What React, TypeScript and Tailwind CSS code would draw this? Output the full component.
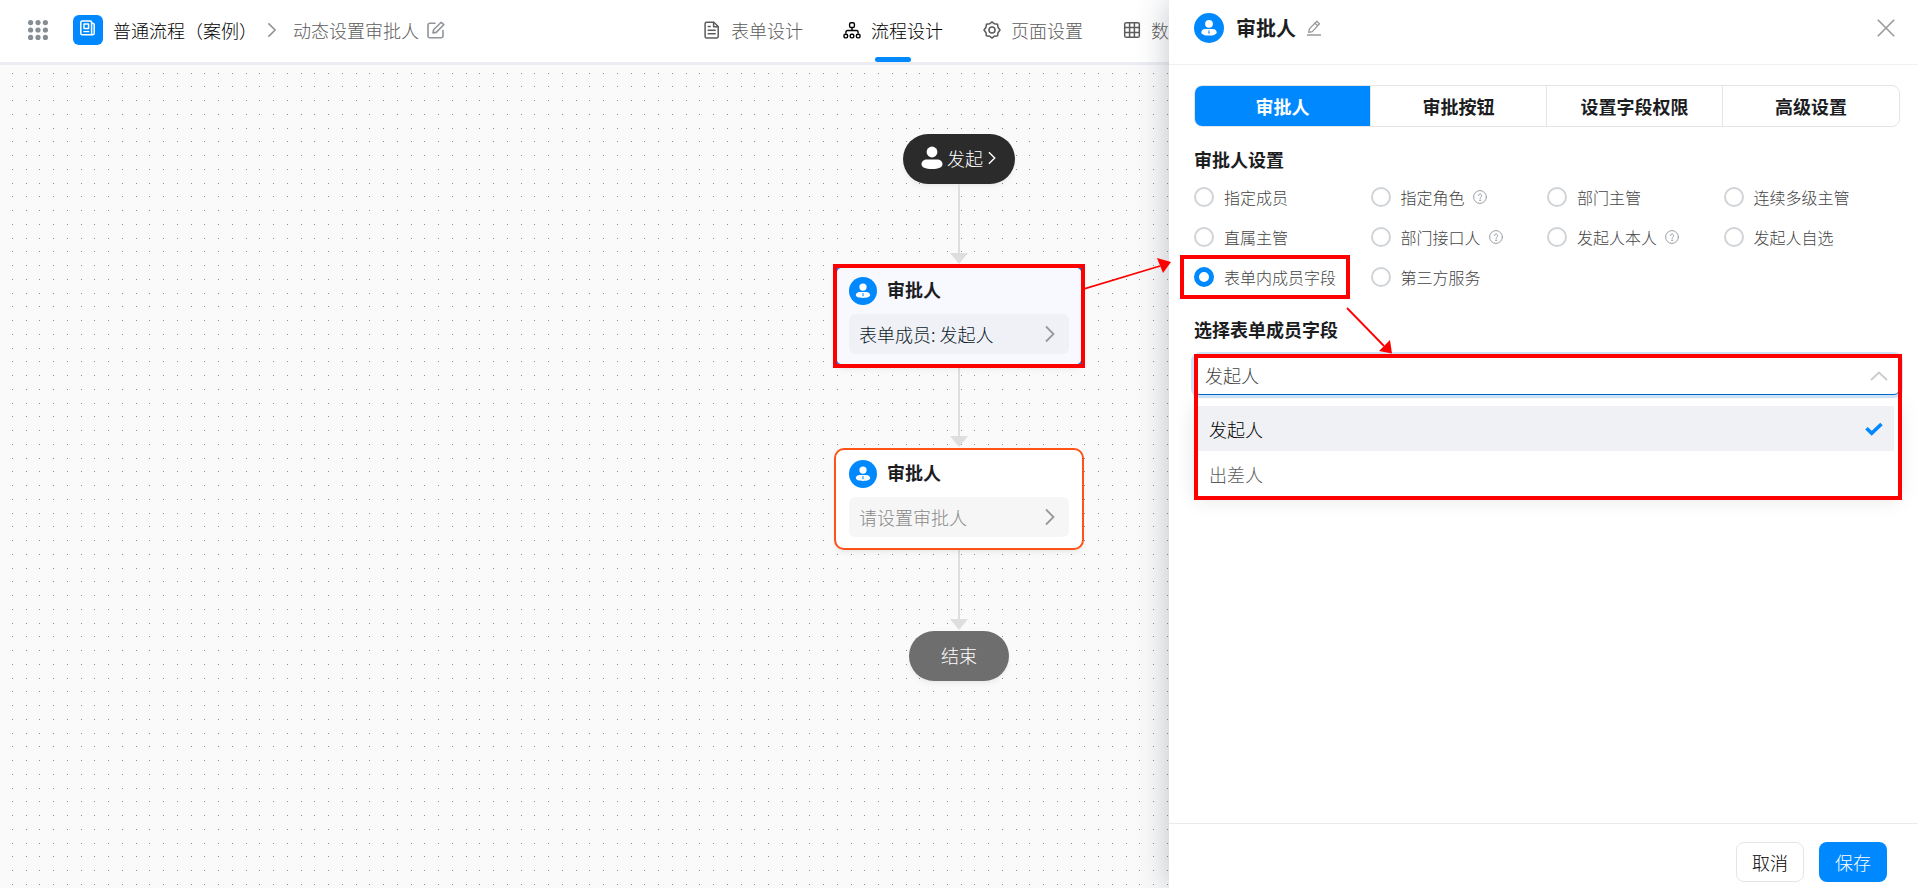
import { ReactNode, useState } from "react"
import clsx from "clsx"

interface ITab {
    label: string
    icon: ReactNode
}

interface IRadioOption {
    label: string
    help?: boolean
}

interface IFlowCardProps {
    text: string
    selected?: boolean
}

const approverOptions: IRadioOption[] = [
    { label: '指定成员' },
    { label: '指定角色', help: true },
    { label: '部门主管' },
    { label: '连续多级主管' },
    { label: '直属主管' },
    { label: '部门接口人', help: true },
    { label: '发起人本人', help: true },
    { label: '发起人自选' },
    { label: '表单内成员字段' },
    { label: '第三方服务' },
]

const panelTabs = ['审批人', '审批按钮', '设置字段权限', '高级设置']

const memberFields = ['发起人', '出差人']

function AppsIcon() {
    return (
        <svg width="20" height="20" viewBox="0 0 20 20" fill="#868e94">
            {[2.6, 10, 17.4].map(y => [2.6, 10, 17.4].map(x => (
                <circle key={`${x}-${y}`} cx={x} cy={y} r="2.6" />
            )))}
        </svg>
    )
}

function LogoIcon() {
    return (
        <svg width="16" height="16" viewBox="0 0 16 16" fill="none" stroke="#fff" strokeWidth="1.5" strokeLinejoin="round">
            <path d="M2.2 1h8.2a1.2 1.2 0 0 1 1.2 1.2V14.8H2.2A1.4 1.4 0 0 1 .8 13.4V2.4A1.4 1.4 0 0 1 2.2 1z" />
            <path d="M11.6 2.600l2.600 1.600v9a1.600 1.600 0 0 1-1.600 1.600h-1" />
            <rect x="4" y="4" width="4.600" height="4.600" />
            <path d="M3.300 11.600h6" strokeWidth="1.300" />
        </svg>
    )
}

function EditIcon() {
    return (
        <svg width="18" height="18" viewBox="0 0 18 18" fill="none" stroke="#8f959b" strokeWidth="1.6" strokeLinecap="round" strokeLinejoin="round">
            <path d="M8 2.200H2.800A1.800 1.800 0 0 0 1 4v11a1.800 1.800 0 0 0 1.800 1.800h11.400A1.800 1.800 0 0 0 16 15V9.500" />
            <path d="M14.200 1.300l2.600 2.400-7.600 7.700-3.200.5.6-3.200z" />
        </svg>
    )
}

function FormIcon() {
    return (
        <svg width="18" height="18" viewBox="0 0 18 18" fill="none" stroke="currentColor" strokeWidth="1.500" strokeLinecap="round" strokeLinejoin="round">
            <path d="M3.600 1.200h7.200l4.400 4.300v9.900a1.500 1.500 0 0 1-1.500 1.500H3.600a1.500 1.500 0 0 1-1.500-1.500V2.700a1.500 1.500 0 0 1 1.500-1.500z" />
            <path d="M10.600 1.400v4.300h4.400M5.200 5.500h2M5.200 9.200h7M5.200 12.800h7" />
        </svg>
    )
}

function FlowIcon() {
    return (
        <svg width="18" height="18" viewBox="0 0 18 18" fill="none" stroke="currentColor" strokeWidth="1.400">
            <rect x="6.600" y="1.700" width="4.800" height="4.800" rx="1.600" />
            <path d="M9 6.500v3M2.900 12.600v-1.500A1.600 1.600 0 0 1 4.500 9.500h9a1.600 1.600 0 0 1 1.600 1.600v1.500" />
            <rect x="1" y="13.300" width="3.600" height="3.600" rx="1.300" />
            <rect x="7.200" y="13.300" width="3.600" height="3.600" rx="1.300" />
            <rect x="13.400" y="13.300" width="3.600" height="3.600" rx="1.300" />
        </svg>
    )
}

function GearIcon() {
    return (
        <svg width="18" height="18" viewBox="0 0 18 18" fill="none" stroke="currentColor" strokeWidth="1.500" strokeLinejoin="round">
            <path d="M9 .9l2.400 1.900 3.200.4.400 3.100L17 9l-2 2.700-.4 3.100-3.200.4L9 17.100l-2.400-1.900-3.200-.4-.4-3.100L1 9l2-2.700.4-3.100 3.200-.4z" />
            <circle cx="9" cy="9" r="3" />
        </svg>
    )
}

function TableIcon() {
    return (
        <svg width="18" height="18" viewBox="0 0 18 18" fill="none" stroke="currentColor" strokeWidth="1.500">
            <rect x="1.700" y="1.700" width="14.600" height="14.600" rx="1.600" />
            <path d="M1.700 6.600h14.600M1.700 11.400h14.600M6.600 1.700v14.600M11.400 1.700v14.600" />
        </svg>
    )
}

function ApproverIcon({ size }: { size: number }) {
    return (
        <svg width={size} height={size} viewBox="0 0 30 30" className="shrink-0">
            <circle cx="15" cy="15" r="15" fill="#0089ff" />
            <circle cx="15" cy="10.800" r="3.900" fill="#fff" />
            <path d="M11.500 16h7c2.600 0 4.200 1.500 4.200 3.400 0 2-3.500 3.100-7.700 3.100s-7.700-1.100-7.700-3.100c0-1.900 1.600-3.400 4.200-3.400z" fill="#fff" />
            <path d="M14.400 17.200h1.200l-.2.900.3 2-.7.900-.7-.9.300-2z" fill="#0089ff" />
        </svg>
    )
}

function PersonIcon() {
    return (
        <svg width="22" height="24" viewBox="0 0 22 24" fill="#fff">
            <circle cx="11" cy="6" r="5.400" />
            <path d="M6 13.500h10c3.200 0 5.500 2 5.500 4.800 0 3.200-4 4.700-10.500 4.700S.5 21.500.5 18.300c0-2.800 2.300-4.800 5.500-4.800z" />
        </svg>
    )
}

function HelpIcon() {
    return (
        <svg width="14" height="14" viewBox="0 0 14 14" fill="none" stroke="#9a9fa5" strokeLinecap="round">
            <circle cx="7" cy="7" r="6.400" />
            <path d="M5.300 5.600a1.700 1.700 0 1 1 2.600 1.500c-.6.300-.9.600-.9 1.200" />
            <circle cx="7" cy="10.200" r=".3" />
        </svg>
    )
}

function Chevron({ className }: { className?: string }) {
    return (
        <svg width="10" height="18" viewBox="0 0 10 18" fill="none" stroke="currentColor" strokeWidth="1.800" className={className}>
            <path d="M1 1.500l7.500 7.500L1 16.500" />
        </svg>
    )
}

const headerTabs: ITab[] = [
    { label: '表单设计', icon: <FormIcon /> },
    { label: '流程设计', icon: <FlowIcon /> },
    { label: '页面设置', icon: <GearIcon /> },
    { label: '数据管理', icon: <TableIcon /> },
]

function Header() {
    const [active, setActive] = useState('流程设计')

    return (
        <header className="grid h-[65px] grid-cols-[1fr_auto_1fr] border-b-3 border-[#ecedf2] bg-white">
            <div className="flex items-center pl-7 pb-0.5">
                <button type="button" aria-label="应用"><AppsIcon /></button>
                <div className="ml-[25px] flex size-[30px] items-start justify-center rounded-md bg-[#0089ff] pt-[5px]">
                    <LogoIcon />
                </div>
                <span className="ml-2.5 text-black">普通流程（案例）</span>
                <Chevron className="ml-2.5 h-4 text-[#8f959b]" />
                <span className="ml-4 text-[#5c5c5c]">动态设置审批人</span>
                <button type="button" aria-label="编辑" className="ml-2"><EditIcon /></button>
            </div>
            <nav className="flex gap-10 pl-2">
                {headerTabs.map(tab => (
                    <button
                        key={tab.label}
                        type="button"
                        onClick={() => setActive(tab.label)}
                        className={clsx("relative flex items-center gap-2.5 pb-0.5", tab.label === active ? "text-black" : "text-[#5c5c5c]")}
                    >
                        {tab.icon}
                        <span>{tab.label}</span>
                        {tab.label === active && (
                            <span className="absolute bottom-0 left-1/2 h-[5px] w-9 -translate-x-1/2 rounded-sm bg-[#0089ff]" />
                        )}
                    </button>
                ))}
            </nav>
        </header>
    )
}

function Dots() {
    return (
        <svg className="absolute inset-0 size-full">
            <defs>
                <pattern id="dots" x="12" y="8" width="55" height="55" patternUnits="userSpaceOnUse">
                    {[0, 13, 27, 41].map(y => [0, 14, 27, 41].map(x => (
                        <rect key={`${x}-${y}`} x={x} y={y} width="1" height="1" fill="#8b8d9c" />
                    )))}
                </pattern>
            </defs>
            <rect width="100%" height="100%" fill="url(#dots)" />
        </svg>
    )
}

function Connector() {
    return (
        <svg width="18" height="81" viewBox="0 0 18 81" fill="#dedede">
            <rect x="8" width="2" height="70" />
            <path d="M0 69h18L9 80z" />
        </svg>
    )
}

function FlowCard({ text, selected }: IFlowCardProps) {
    return (
        <div className={clsx("relative w-[250px] rounded-[10px] border-2 shadow-md shadow-black/5", selected ? "border-[#0089ff] bg-[#f8f9ff]" : "border-[#ff5219] bg-white")}>
            <div className="px-[13px] pt-2.5 pb-[11px]">
                <div className="flex items-start gap-2.5">
                    <ApproverIcon size={28} />
                    <span className="font-bold text-[#1c1d1f]">审批人</span>
                </div>
                <button
                    type="button"
                    className={clsx("mt-[9px] flex h-10 w-full items-center justify-between rounded-md pr-3.5 pl-2.5", selected ? "bg-[#f0f1f6] text-[#0d1b2a]" : "bg-[#f6f6f6] text-[#888]")}
                >
                    <span>{text}</span>
                    <Chevron className="text-[#999]" />
                </button>
            </div>
            {selected && (
                <>
                    <span className="absolute -inset-[3px] border-4 border-[#f00]" />
                    <svg width="90" height="36" viewBox="0 0 90 36" className="absolute -top-2.5 left-full z-20 ml-0.5">
                        <path d="M0 32L76 9" stroke="#f00" strokeWidth="1.800" />
                        <path d="M73 1l14 4-8 11z" fill="#f00" />
                    </svg>
                </>
            )}
        </div>
    )
}

function Canvas() {
    return (
        <main className="relative flex grow flex-col items-center bg-[#fafafa] pt-[69px]">
            <Dots />
            <div className="relative flex flex-col items-center">
                <button type="button" className="flex h-[50px] w-28 items-center justify-center gap-1 rounded-full bg-[#2b2b2b] pb-0.5 text-white shadow-md shadow-black/5">
                    <PersonIcon />
                    <span>发起</span>
                    <Chevron className="h-3.5" />
                </button>
                <Connector />
                <FlowCard text="表单成员: 发起人" selected />
                <Connector />
                <FlowCard text="请设置审批人" />
                <Connector />
                <div className="flex h-[50px] w-[100px] items-center justify-center rounded-full bg-[#6e6e6e] pb-0.5 text-white shadow-md shadow-black/5">结束</div>
            </div>
        </main>
    )
}

function ApproverPanel() {
    const [tab, setTab] = useState(panelTabs[0])
    const [approver, setApprover] = useState('表单内成员字段')
    const [field, setField] = useState(memberFields[0])

    return (
        <aside className="absolute inset-y-0 right-0 z-10 flex w-[749px] max-w-full flex-col bg-white shadow-[0_0_30px_rgba(50,60,80,0.3)]">
            <div className="flex items-center border-b border-[#f0f0f0] pt-[13px] pr-[23px] pb-[21px] pl-[25px]">
                <ApproverIcon size={30} />
                <h2 className="ml-3 text-xl font-bold text-[#1c1d1f]">审批人</h2>
                <button type="button" aria-label="重命名" className="ml-2.5">
                    <svg width="16" height="16" viewBox="0 0 16 16" fill="none" stroke="#999" strokeWidth="1.300" strokeLinejoin="round">
                        <path d="M10.800 1.200l2.700 2.600-7.200 7.800-3.600.7.700-3.400zM9 3.200l2.700 2.500M1 15h14" />
                    </svg>
                </button>
                <button type="button" aria-label="关闭" className="ml-auto">
                    <svg width="18" height="18" viewBox="0 0 18 18" fill="none" stroke="#999" strokeWidth="1.600">
                        <path d="M.8.8l16.400 16.400M17.200.8L.8 17.200" />
                    </svg>
                </button>
            </div>

            <div className="grow pt-5 pr-[18px] pl-[25px]">
                <div className="grid h-[42px] grid-cols-4 divide-x divide-[#e5e5e5] overflow-hidden rounded-lg border border-[#e5e5e5]">
                    {panelTabs.map(item => (
                        <button
                            key={item}
                            type="button"
                            onClick={() => setTab(item)}
                            className={clsx("font-bold", item === tab ? "bg-[#0089ff] text-white" : "text-[#1c1d1f]")}
                        >{item}</button>
                    ))}
                </div>

                <h3 className="mt-5 font-bold text-[#1c1d1f]">审批人设置</h3>
                <div className="mt-4 grid grid-cols-4 gap-y-5">
                    {approverOptions.map(option => (
                        <div key={option.label} className="flex h-5 items-center">
                            <label className="relative flex items-center gap-2.5 text-base leading-5 text-[#444]">
                                <input
                                    type="radio"
                                    name="approver"
                                    checked={option.label === approver}
                                    onChange={() => setApprover(option.label)}
                                    className="size-5 appearance-none rounded-full border-2 border-[#d0d3d8] bg-white checked:border-5 checked:border-[#0089ff]"
                                />
                                {option.label}
                                {option.label === '表单内成员字段' && (
                                    <>
                                        <span className="absolute -inset-x-3.5 -inset-y-3 border-4 border-[#f00]" />
                                        <svg width="48" height="50" viewBox="0 0 48 50" className="absolute top-10 left-full z-20 ml-2.5">
                                            <path d="M1 1l37 38" stroke="#f00" strokeWidth="1.800" />
                                            <path d="M44 33l2 13.500-13-2.500z" fill="#f00" />
                                        </svg>
                                    </>
                                )}
                            </label>
                            {option.help && <button type="button" aria-label="说明" className="ml-2"><HelpIcon /></button>}
                        </div>
                    ))}
                </div>

                <label htmlFor="member-field" className="mt-[30px] block font-bold text-[#1c1d1f]">选择表单成员字段</label>
                <div className="relative mt-3.5">
                    <div className="relative">
                        <select
                            id="member-field"
                            value={field}
                            onChange={event => setField(event.target.value)}
                            className="block h-10 w-full appearance-none rounded-md border border-[#0068c4] bg-white px-2.5 text-[#444] shadow-[0_0_0_3px_#cfe3f7] outline-none"
                        >
                            {memberFields.map(item => <option key={item}>{item}</option>)}
                        </select>
                        <svg width="18" height="10" viewBox="0 0 18 10" fill="none" stroke="#ccc" strokeWidth="1.800" className="pointer-events-none absolute top-4 right-3">
                            <path d="M1 9l8-7.500L17 9" />
                        </svg>
                    </div>
                    <ul className="mt-1 rounded-md bg-white pt-[7px] pr-1.5 pl-1 shadow-[0_4px_20px_rgba(0,0,0,0.1)]">
                        {memberFields.map(item => (
                            <li key={item}>
                                <button
                                    type="button"
                                    onClick={() => setField(item)}
                                    className={clsx("flex h-[45px] w-full items-center justify-between px-[11px]", item === field ? "bg-[#f0f1f4] text-black" : "text-[#5c5c5c]")}
                                >
                                    {item}
                                    {item === field && (
                                        <svg width="18" height="14" viewBox="0 0 18 14" fill="none" stroke="#0089ff" strokeWidth="3.600">
                                            <path d="M1.500 6.200l5.200 5L16.500 2" />
                                        </svg>
                                    )}
                                </button>
                            </li>
                        ))}
                    </ul>
                    <span className="pointer-events-none absolute -top-px -right-0.5 -bottom-1 left-0 border-4 border-[#f00]" />
                </div>
            </div>

            <div className="flex justify-end gap-[15px] border-t border-[#ebebeb] pt-[18px] pr-[31px] pb-1.5">
                <button type="button" className="h-10 rounded-lg border border-[#e5e5e5] px-[15px] text-black">取消</button>
                <button type="button" className="h-10 rounded-lg bg-[#0089ff] px-4 text-white">保存</button>
            </div>
        </aside>
    )
}

export default function App() {
    return (
        <div className="relative flex min-h-screen flex-col overflow-hidden font-['Noto_Sans_CJK_SC',sans-serif] text-lg leading-6 font-light">
            <Header />
            <Canvas />
            <ApproverPanel />
        </div>
    )
}
